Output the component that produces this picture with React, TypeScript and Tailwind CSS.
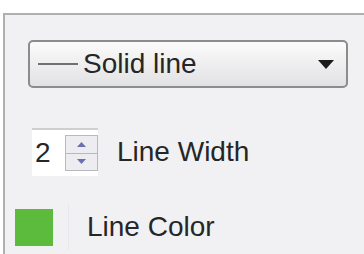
export default function App() {
  return (
    <div className="w-[364px] h-[254px] bg-white overflow-hidden font-['Liberation_Sans',Arial,sans-serif] text-[#262626]">
      <div className="ml-[3px] mt-[13px] h-[241px] border-t-2 border-l-2 border-[#b0b0b0] bg-[#f1f1f3] flex flex-col">
        {/* Line style dropdown */}
        <div className="ml-[23px] mt-[25px] w-[320px] h-[48px] rounded-[5px] border-2 border-[#8c8c8c] bg-gradient-to-b from-[#fbfbfb] to-[#e2e2e4] flex items-center">
          <div className="ml-[8px] w-[40px] h-[2px] bg-[#707070]" />
          <span className="ml-[5px] text-[28px] leading-none">Solid line</span>
          <svg className="ml-auto mr-[12px]" width="16" height="9" viewBox="0 0 16 9">
            <path d="M0 0 H16 L8 9 Z" fill="#1a1a1a" />
          </svg>
        </div>

        {/* Line width */}
        <div className="mt-[40px] flex items-center">
          <div className="ml-[27px] w-[66px] h-[48px] bg-white border-t-2 border-[#cfcfd2] flex items-center">
            <span className="ml-[3px] text-[28px] leading-none">2</span>
            <div className="ml-auto w-[33px] h-[36px] border border-[#b8b8c0] bg-[#ececf1] flex flex-col">
              <div className="flex-1 flex items-center justify-center border-b border-[#b8b8c0]">
                <svg width="9" height="5" viewBox="0 0 9 5">
                  <path d="M0 5 L4.5 0 L9 5 Z" fill="#6b6fb0" />
                </svg>
              </div>
              <div className="flex-1 flex items-center justify-center">
                <svg width="9" height="5" viewBox="0 0 9 5">
                  <path d="M0 0 H9 L4.5 5 Z" fill="#6b6fb0" />
                </svg>
              </div>
            </div>
          </div>
          <span className="ml-[19px] text-[28px] leading-none">Line Width</span>
        </div>

        {/* Line colour */}
        <div className="mt-[28px] flex items-center">
          <div className="ml-[10px] w-[38px] h-[37px] bg-[#5cba3c]" />
          <div className="ml-[15px] w-px h-[46px] bg-[#e8e8ec]" />
          <span className="ml-[18px] text-[28px] leading-none">Line Color</span>
        </div>
      </div>
    </div>
  );
}
